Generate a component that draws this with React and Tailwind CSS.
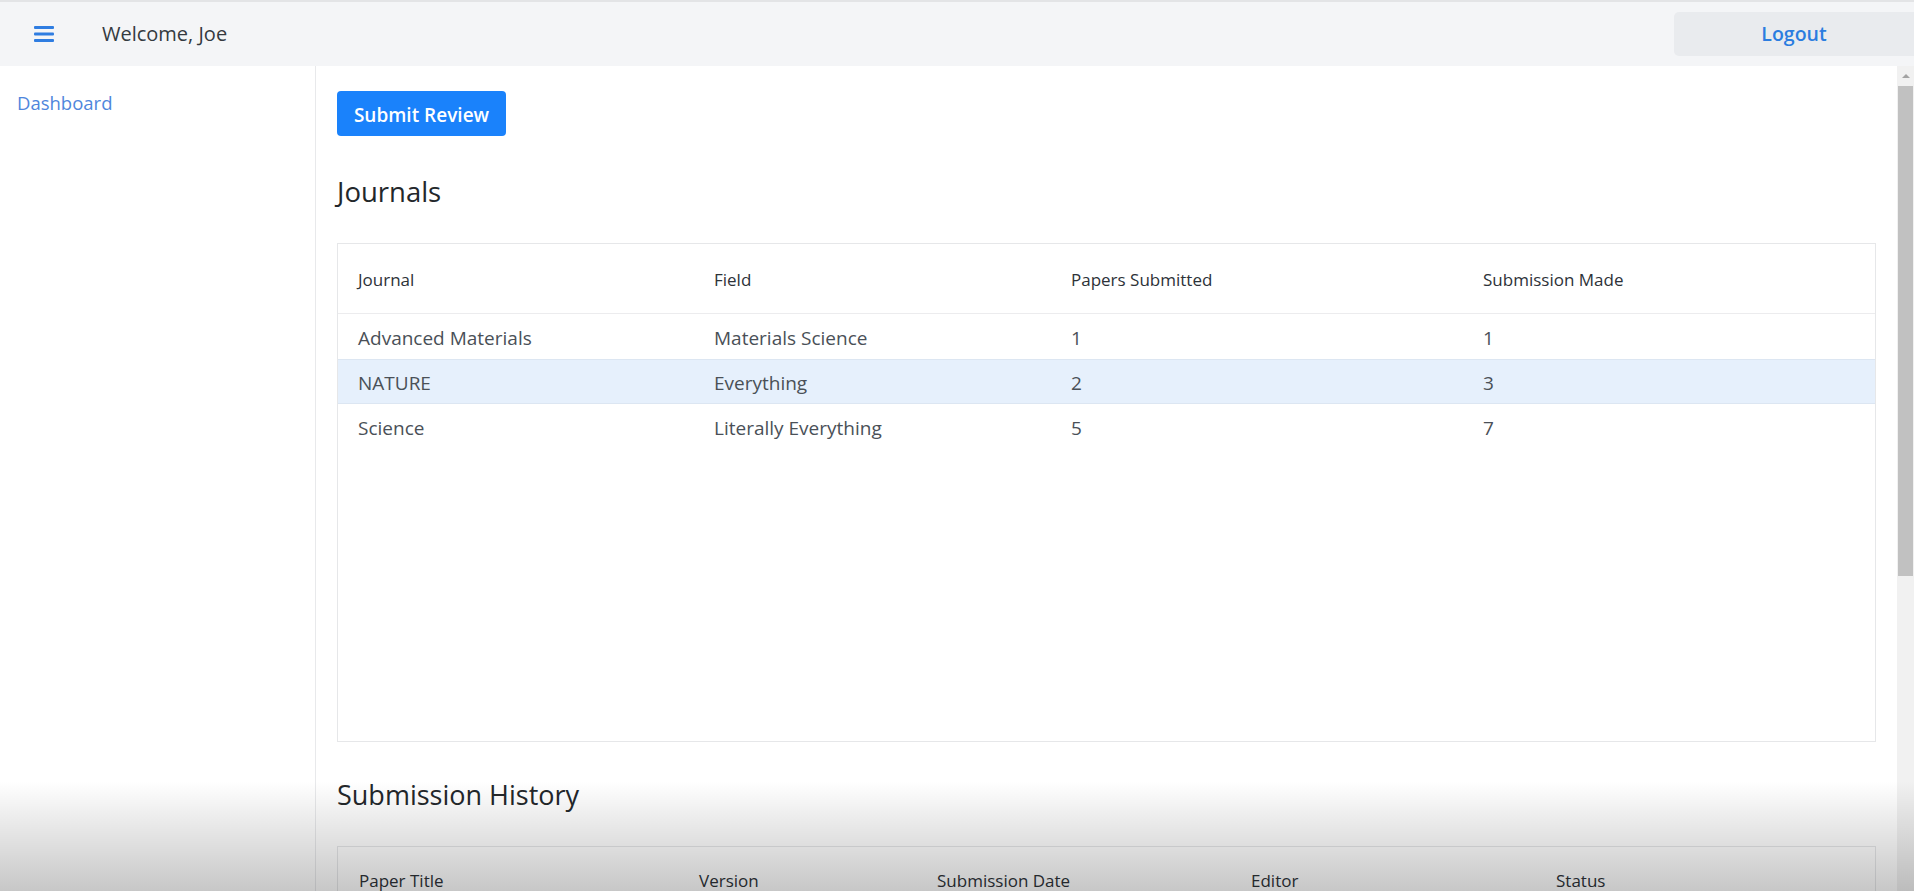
import React from 'react';

const journals = [
  { name: 'Advanced Materials', field: 'Materials Science', papers: 1, made: 1 },
  { name: 'NATURE', field: 'Everything', papers: 2, made: 3, active: true },
  { name: 'Science', field: 'Literally Everything', papers: 5, made: 7 },
];

const Hamburger = () => (
  <svg width="20" height="16" viewBox="0 0 20 16" fill="#2f7de1">
    <rect x="0" y="0" width="20" height="3" rx="1" />
    <rect x="0" y="6.5" width="20" height="3" rx="1" />
    <rect x="0" y="13" width="20" height="3" rx="1" />
  </svg>
);

const Scrollbar = () => (
  <div className="w-[17px] shrink-0 bg-[#f1f1f1] flex flex-col">
    <div className="h-[20px] flex items-center justify-center">
      <div className="w-0 h-0 border-l-[4px] border-r-[4px] border-b-[4px] border-l-transparent border-r-transparent border-b-[#a3a3a3]" />
    </div>
    <div className="h-[490px] mx-[1px] bg-[#c1c1c1]" />
  </div>
);

const App = () => {
  return (
    <div className="relative h-screen flex flex-col overflow-hidden bg-white font-['Open_Sans',sans-serif]">
      {/* top bar */}
      <header className="h-[66px] shrink-0 flex items-center bg-[#f4f5f7] border-t-2 border-[#e3e4e6]">
        <button className="ml-[34px] flex items-center">
          <Hamburger />
        </button>
        <span className="ml-[48px] text-[20px] font-medium text-[#343a40]">Welcome, Joe</span>
        <button className="ml-auto w-[240px] h-[44px] rounded-l-[5px] bg-[#e9ebee] text-[19.5px] font-semibold text-[#2b7de0]">
          Logout
        </button>
      </header>

      <div className="flex flex-1 min-h-0">
        <aside className="w-[316px] shrink-0 border-r border-[#e8e9eb] px-[17px] pt-[23px]">
          <a className="text-[18.5px] text-[#4f86dc]">Dashboard</a>
        </aside>

        <main className="flex flex-1 min-w-0">
          <div className="flex-1 min-w-0 overflow-hidden px-[21px] pt-[25px]">
            <button className="w-[169px] h-[45px] pt-[3px] rounded-[4px] bg-[#1a82fb] text-white text-[19px] font-semibold">
              Submit Review
            </button>

            <h2 className="mt-[38px] text-[27.5px] leading-[36px] font-medium text-[#23272b]">Journals</h2>

            <div className="mt-[33px] h-[499px] border border-[#e6e7e9]">
              <div className="grid grid-cols-[356px_357px_412px_1fr] h-[70px] pt-[2px] items-center border-b border-[#ececee] text-[17px] font-medium text-[#2d3238]">
                <div className="pl-[20px]">Journal</div>
                <div className="pl-[20px]">Field</div>
                <div className="pl-[20px]">Papers Submitted</div>
                <div className="pl-[20px]">Submission Made</div>
              </div>
              {journals.map((j) => (
                <div
                  key={j.name}
                  className={`grid grid-cols-[356px_357px_412px_1fr] h-[45px] pt-[4px] items-center text-[19px] text-[#4a5057] ${
                    j.active ? 'bg-[#e6f0fc] border-y border-[#dce6f2]' : ''
                  }`}
                >
                  <div className="pl-[20px]">{j.name}</div>
                  <div className="pl-[20px]">{j.field}</div>
                  <div className="pl-[20px]">{j.papers}</div>
                  <div className="pl-[20px]">{j.made}</div>
                </div>
              ))}
            </div>

            <h2 className="mt-[35px] text-[27px] leading-[36px] font-medium text-[#23272b]">Submission History</h2>

            <div className="mt-[33px] h-[200px] border border-[#e6e7e9]">
              <div className="grid grid-cols-[340px_238px_314px_305px_1fr] h-[68px] items-center border-b border-[#ececee] text-[17px] font-medium text-[#2d3238]">
                <div className="pl-[21px]">Paper Title</div>
                <div className="pl-[21px]">Version</div>
                <div className="pl-[21px]">Submission Date</div>
                <div className="pl-[21px]">Editor</div>
                <div className="pl-[21px]">Status</div>
              </div>
            </div>
          </div>
          <Scrollbar />
        </main>
      </div>

      {/* video player shade along the bottom edge */}
      <div className="pointer-events-none absolute inset-x-0 bottom-0 h-[110px] bg-gradient-to-b from-transparent to-black/[0.22]" />
    </div>
  );
};

export default App;
